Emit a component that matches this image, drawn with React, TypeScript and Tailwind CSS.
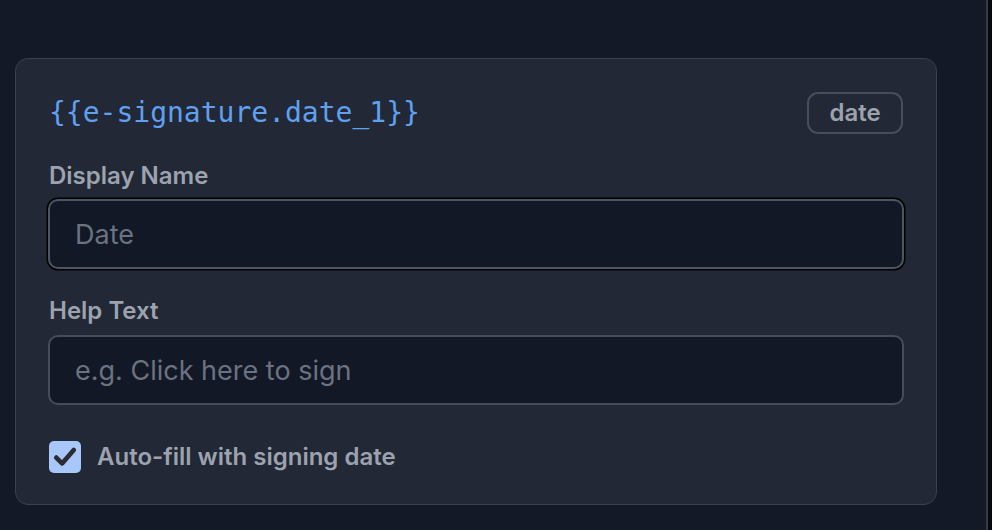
import { useState } from "react";

export default function App() {
  const [autoFill, setAutoFill] = useState(true);

  return (
    <div className="flex h-screen w-full bg-black font-['Inter',sans-serif]">
      <main className="flex-1 bg-[#131926] border-r-2 border-[#363b47] pl-[15px] pr-[49px] pt-[58px]">
        <div className="rounded-[13px] border border-[#3a404e] bg-[#222835] pl-[32px] pr-[32px] pt-[33px] pb-[29px]">
          <div className="flex items-center justify-between h-[42px]">
            <span className="pl-px font-['DejaVu_Sans_Mono',monospace] text-[28px] leading-none text-[#60a0f0]">
              {"{{e-signature.date_1}}"}
            </span>
            <span className="mr-px flex h-[42px] w-[96px] items-center justify-center rounded-[11px] border-2 border-[#474d5a] text-[24px] font-semibold text-[#9ca3af]">
              date
            </span>
          </div>

          <label className="mt-[27px] block pl-px text-[24px] font-semibold leading-[30px] text-[#9ca3af]">
            Display Name
          </label>
          <input
            placeholder="Date"
            className="mt-[8px] block h-[70px] w-full rounded-[10px] border-2 border-[#4f5563] bg-[#121826] px-[25px] text-[27px] text-gray-200 placeholder:text-[#6b7280] shadow-[0_0_0_1.5px_#000] outline-none"
          />

          <label className="mt-[27px] block pl-px text-[24px] font-semibold leading-[30px] text-[#9ca3af]">
            Help Text
          </label>
          <input
            placeholder="e.g. Click here to sign"
            className="mt-[9px] block h-[70px] w-full rounded-[10px] border-2 border-[#464c59] bg-[#121826] px-[25px] text-[27px] text-gray-200 placeholder:text-[#6b7280] outline-none"
          />

          <label className="mt-[34px] flex items-center gap-[16px] pl-px cursor-pointer">
            <button
              type="button"
              onClick={() => setAutoFill(!autoFill)}
              className="flex h-[32px] w-[32px] items-center justify-center rounded-[5px] bg-[#a8c7fa]"
            >
              {autoFill && (
                <svg viewBox="0 0 24 24" className="h-[28px] w-[28px]" fill="none" stroke="#2c2d30" strokeWidth="4" strokeLinecap="round" strokeLinejoin="round">
                  <path d="M4.5 12.5l5 5L19.5 6" />
                </svg>
              )}
            </button>
            <span className="text-[24px] font-semibold text-[#9ca3af]">Auto-fill with signing date</span>
          </label>
        </div>
      </main>
      <div className="w-[4px] bg-[#08090c]" />
    </div>
  );
}
